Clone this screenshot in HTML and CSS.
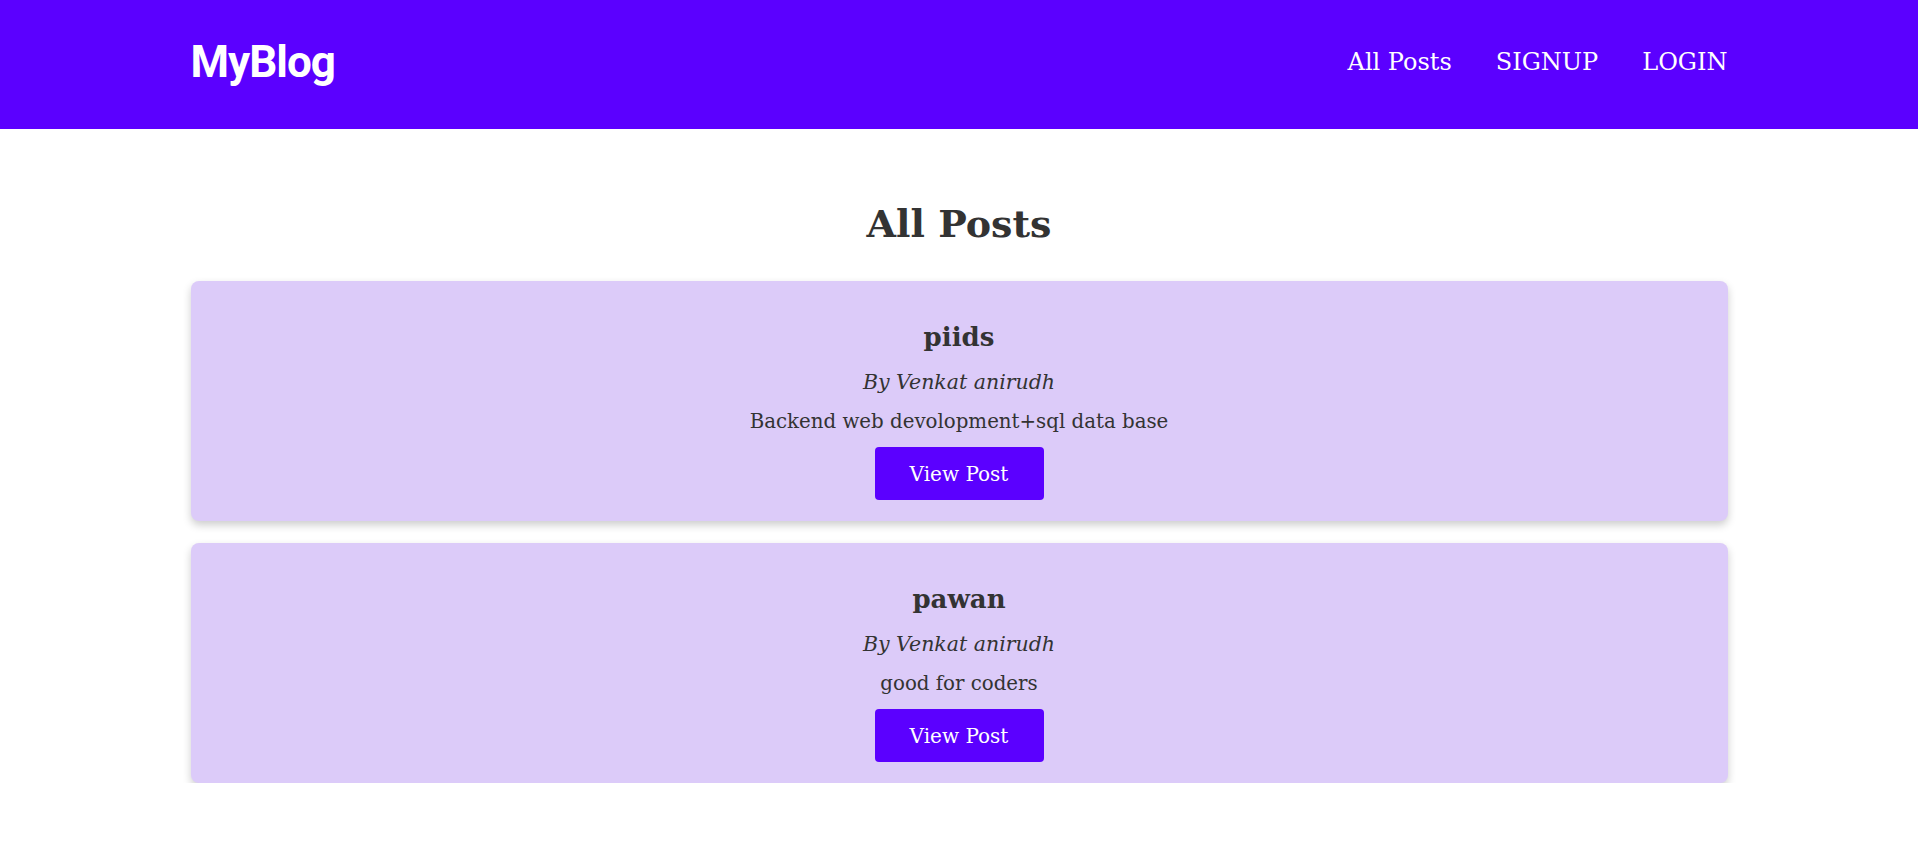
FILE: index.html
```html
<!DOCTYPE html>
<html lang="en">
<head>
<meta charset="utf-8">
<title>MyBlog</title>
<link rel="stylesheet" href="styles.css">
</head>
<body>
<header class="site-header">
  <div class="header-inner">
    <a class="logo" href="#">MyBlog</a>
    <nav class="nav">
      <a href="#">All Posts</a>
      <a href="#">SIGNUP</a>
      <a href="#">LOGIN</a>
    </nav>
  </div>
</header>
<main class="content">
  <h2 class="page-title">All Posts</h2>
  <div class="posts">
    <article class="post-card">
      <h3 class="post-title">piids</h3>
      <p class="post-author">By Venkat anirudh</p>
      <p class="post-desc">Backend web devolopment+sql data base</p>
      <a class="btn" href="#">View Post</a>
    </article>
    <article class="post-card">
      <h3 class="post-title">pawan</h3>
      <p class="post-author">By Venkat anirudh</p>
      <p class="post-desc">good for coders</p>
      <a class="btn" href="#">View Post</a>
    </article>
  </div>
</main>
</body>
</html>
```
FILE: styles.css
```css
* { box-sizing: border-box; }
body {
  margin: 0;
  font-family: "DejaVu Serif", serif;
  color: #333;
  background: #fff;
}
a { text-decoration: none; }
.site-header {
  background: #5b00ff;
  height: 129px;
  padding-bottom: 6px;
  display: flex;
  align-items: center;
}
.header-inner {
  width: 1537px;
  margin: 0 auto;
  display: flex;
  justify-content: space-between;
  align-items: center;
}
.logo {
  font-family: Roboto, sans-serif;
  font-weight: 700;
  font-size: 44px;
  color: #fff;
  letter-spacing: -1px;
}
.nav {
  display: flex;
  gap: 44px;
}
.nav a {
  color: #fff;
  font-size: 24px;
}
.content {
  width: 1537px;
  margin: 0 auto;
  padding-top: 70px;
}
.page-title {
  margin: 0 0 32px;
  text-align: center;
  font-size: 38px;
  font-weight: 700;
  line-height: 50px;
}
.posts {
  display: flex;
  flex-direction: column;
  gap: 22px;
}
.post-card {
  background: #dccbf9;
  border-radius: 8px;
  box-shadow: 0 4px 8px rgba(0,0,0,0.2);
  height: 240px;
  padding-top: 38px;
  display: flex;
  flex-direction: column;
  align-items: center;
}
.post-title {
  margin: 0;
  font-size: 26px;
  line-height: 36px;
  font-weight: 700;
}
.post-author {
  margin: 12px 0 0;
  font-style: italic;
  font-size: 20.5px;
  line-height: 30px;
}
.post-desc {
  margin: 10px 0 0;
  font-size: 19.8px;
  line-height: 30px;
}
.btn {
  margin-top: 10px;
  background: #5b00ff;
  color: #fff;
  border-radius: 4px;
  width: 169px;
  height: 53px;
  display: flex;
  align-items: center;
  justify-content: center;
  font-size: 20px;
}
```
